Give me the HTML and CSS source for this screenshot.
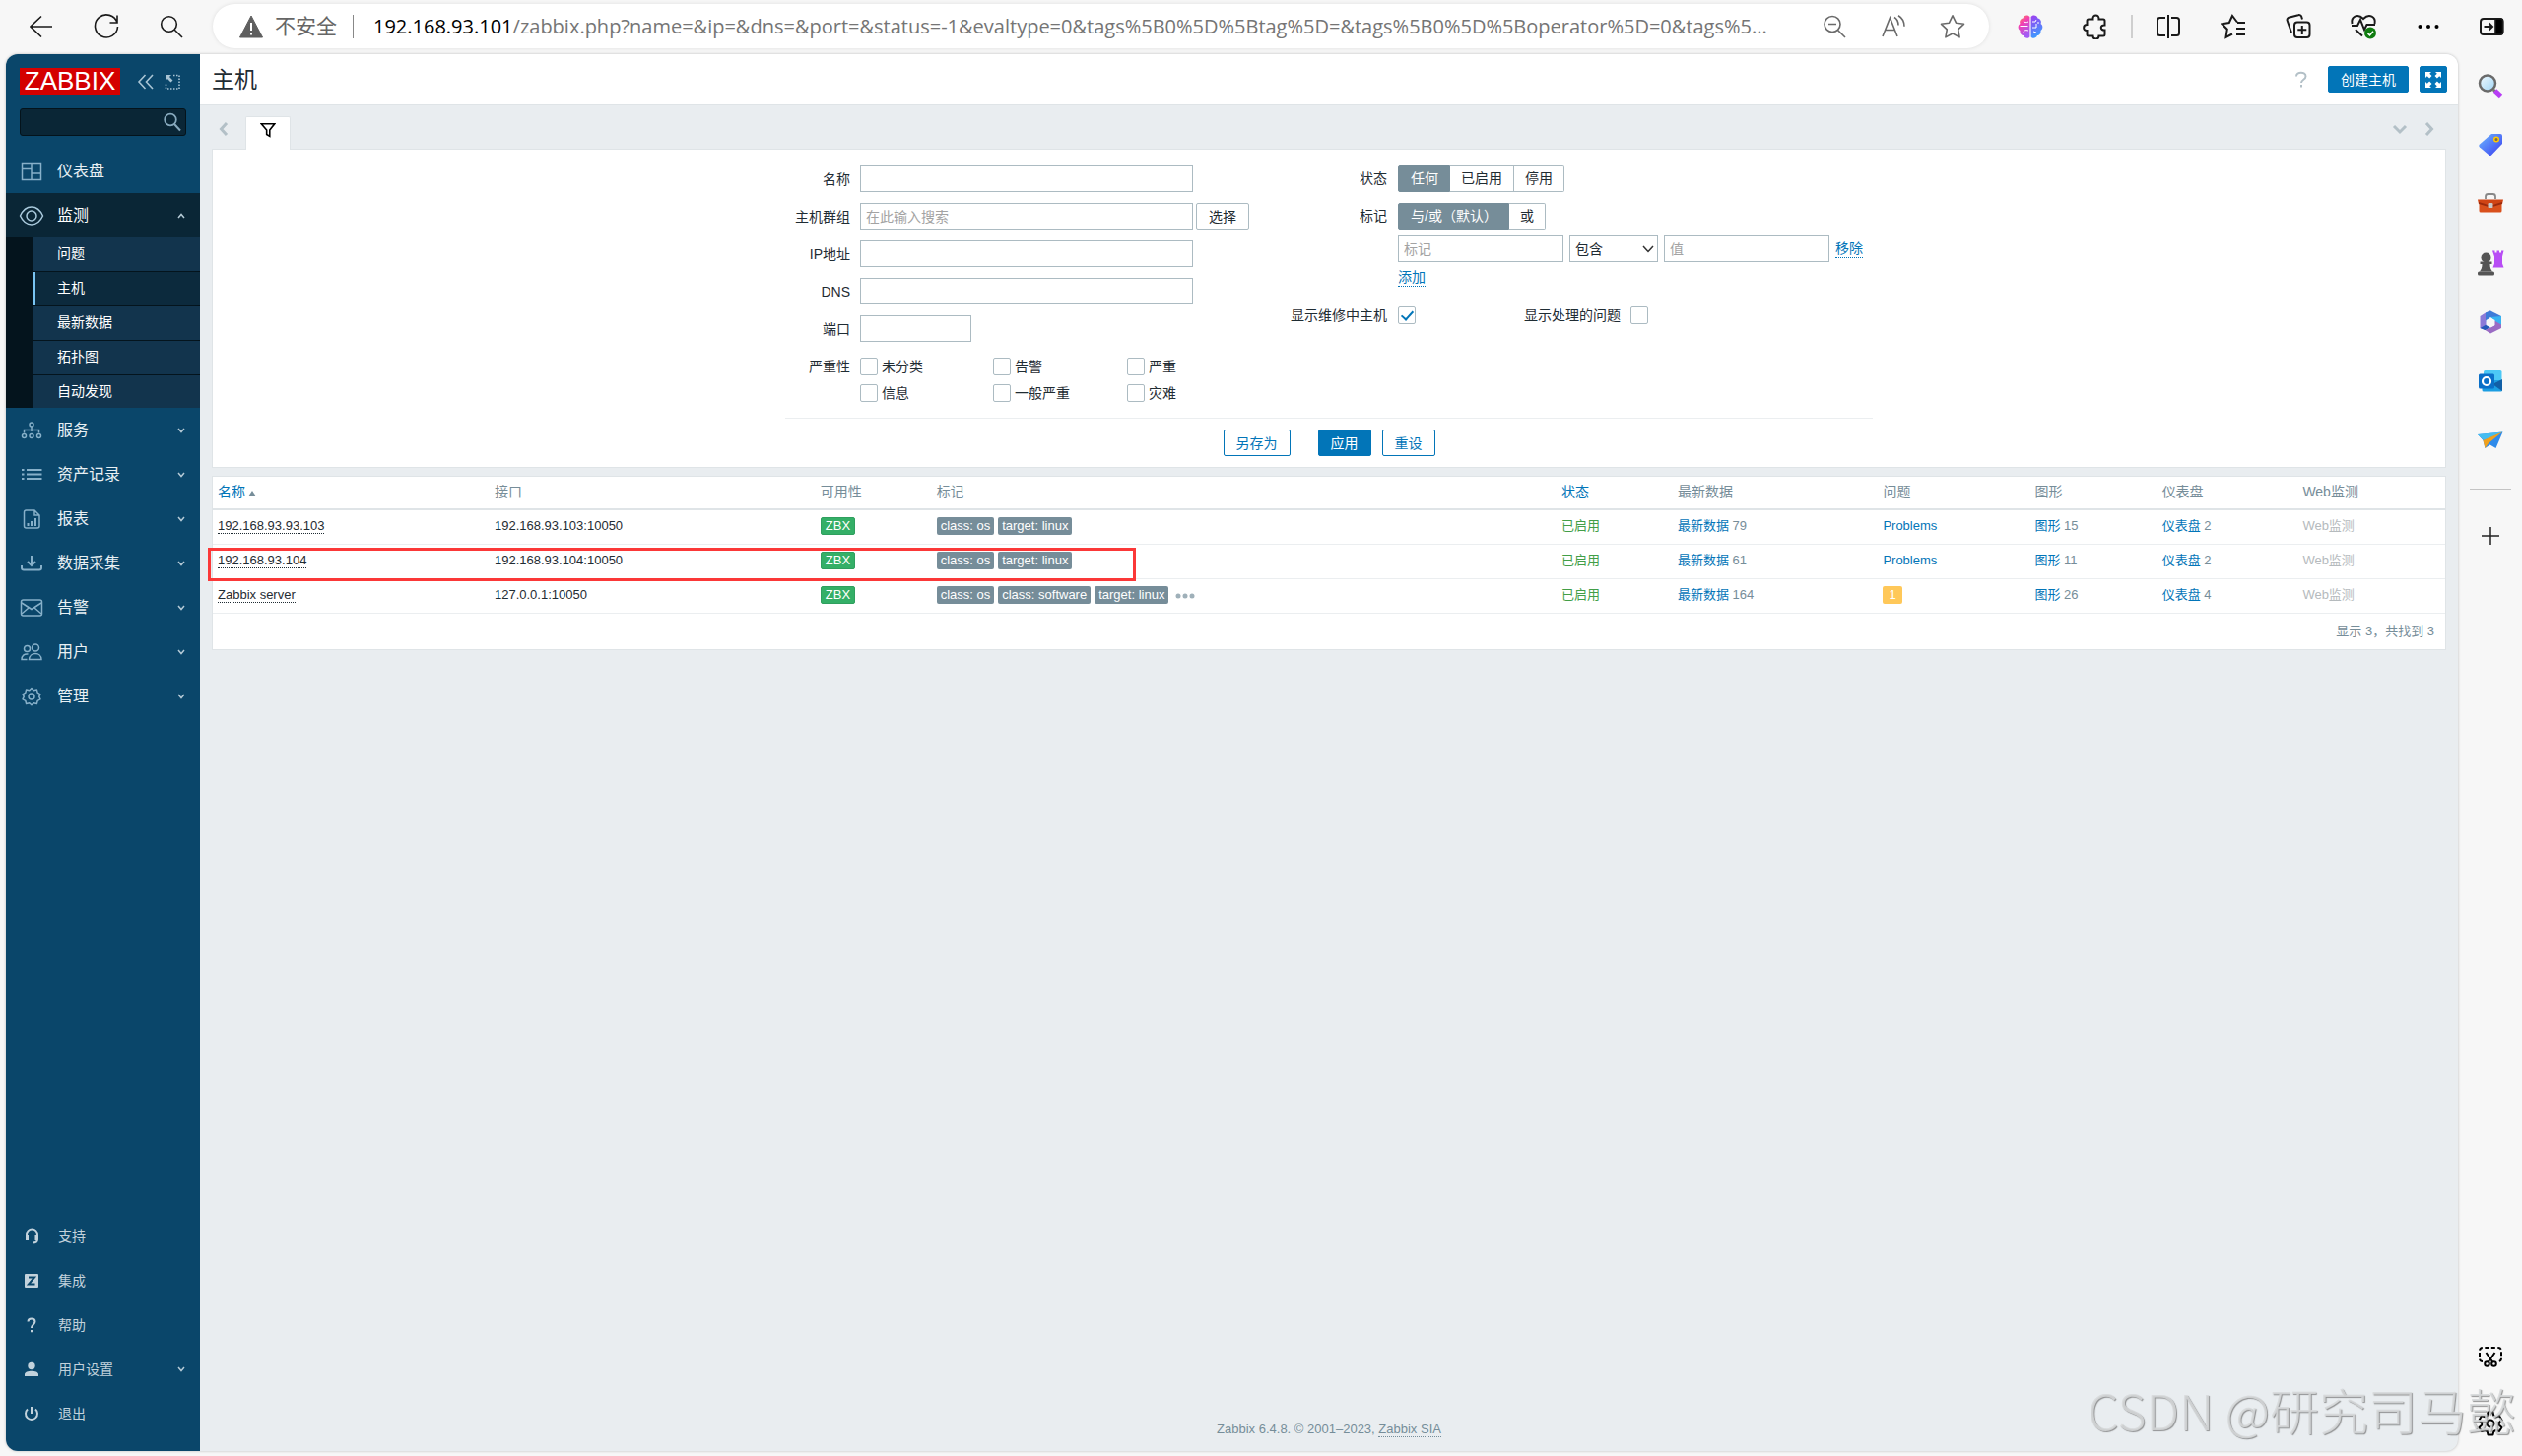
FILE: index.html
```html
<!DOCTYPE html>
<html lang="zh-CN">
<head>
<meta charset="utf-8">
<title>主机</title>
<link rel="stylesheet" href="styles.css">
</head>
<body>
<div class="browser">
  <header class="toolbar">
    <button class="tool" aria-label="后退"><svg width="24" height="24" viewBox="0 0 24 24"><path d="M23 12H1M12 1.500L1 12l11 10.500"/></svg></button>
    <button class="tool" aria-label="刷新"><svg width="26" height="26" viewBox="0 0 26 26"><path d="M24 9A11.500 11.500 0 1 0 24.500 13M24 1.500V9h-7.500"/></svg></button>
    <button class="tool" aria-label="搜索"><svg width="24" height="24" viewBox="0 0 24 24"><circle cx="9.500" cy="9.500" r="7.800"/><path d="M15 15l8 8"/></svg></button>
    <div class="address">
      <svg class="warn" width="24" height="24" viewBox="0 0 24 24"><path d="M12 1L23.500 23H.5z" fill="#5f5f5f" stroke="#5f5f5f" stroke-linejoin="round"/><path d="M12 8v8M12 18v2.500" stroke="#fff" stroke-width="2"/></svg>
      <span class="insecure">不安全</span>
      <span class="bar"></span>
      <span class="url"><b>192.168.93.101</b>/zabbix.php?name=&amp;ip=&amp;dns=&amp;port=&amp;status=-1&amp;evaltype=0&amp;tags%5B0%5D%5Btag%5D=&amp;tags%5B0%5D%5Boperator%5D=0&amp;tags%5...</span>
      <button class="tool in" aria-label="缩小"><svg width="24" height="24" viewBox="0 0 24 24"><circle cx="10" cy="9.500" r="8"/><path d="M15.500 15.500l7.500 7.500M6 9.500h8"/></svg></button>
      <button class="tool in" aria-label="朗读"><svg width="26" height="24" viewBox="0 0 26 24"><path d="M2 22L9.500 3 17 22M5 15.500h9M14 2.500c3 2 4 5 4 8M18 .8c5 3 6 7 6 11"/></svg></button>
      <button class="tool in" aria-label="收藏"><svg width="26" height="26" viewBox="0 0 26 26"><path d="M13 1.800l3.500 7.400 8 1.100-5.800 5.600 1.400 8L13 20l-7.100 3.900 1.400-8L1.500 10.300l8-1.100z" stroke-linejoin="round"/></svg></button>
    </div>
    <button class="tool" aria-label="脑图"><svg width="26" height="26" viewBox="0 0 26 26"><defs><linearGradient id="brL" x1="0" y1="0" x2=".4" y2="1"><stop offset="0" stop-color="#ff9a3c"/><stop offset=".4" stop-color="#f43fb0"/><stop offset="1" stop-color="#a35bf5"/></linearGradient><linearGradient id="brR" x1="0" y1="0" x2=".3" y2="1"><stop offset="0" stop-color="#a13df0"/><stop offset="1" stop-color="#3d9bff"/></linearGradient></defs><path d="M12.400 3C11 .5 6 1 5.500 4.500 2.500 5 1.500 8 2.500 10 0 11.500 0 15.500 2.500 17c-.3 3 1.500 5 3.500 5 1 3.200 5 3.500 6.400 1.500z" fill="url(#brL)" stroke="none"/><path d="M13.600 3C15 .5 20 1 20.500 4.500c3 .5 4 3.500 3 5.500 2.500 1.500 2.500 5.500 0 7 .3 3-1.500 5-3.500 5-1 3.200-5 3.500-6.400 1.500z" fill="url(#brR)" stroke="none"/><path d="M2.500 12.500h8M6 7c1 2 3 2 5 1M6 19c0-2 2-3 5-2M15 8h3l1-2M19 10v4h-4M16 18l3 1M21 8v2" stroke="#fff" stroke-width="1"/></svg></button>
    <button class="tool" aria-label="扩展"><svg width="26" height="26" viewBox="0 0 26 26"><path d="M6 5.500h4.500C10 0 17 0 16.500 5.500H21a1.500 1.500 0 0 1 1.500 1.500v4.500c-5-.5-5 5.500 0 5v4.500A1.500 1.500 0 0 1 21 22.500h-4.500c0 4-6 4-6 0H6A1.500 1.500 0 0 1 4.500 21v-4c-4.500.5-4.500-6 0-6V7A1.500 1.500 0 0 1 6 5.500z" stroke-width="2"/></svg></button>
    <span class="rule"></span>
    <button class="tool" aria-label="分屏"><svg width="26" height="26" viewBox="0 0 26 26"><path d="M10 4H4.500A2.500 2.500 0 0 0 2 6.500v13A2.500 2.500 0 0 0 4.500 22H10M16 4h5.500A2.500 2.500 0 0 1 24 6.500v13a2.500 2.500 0 0 1-2.500 2.500H16M13 1v24" stroke-width="2"/></svg></button>
    <button class="tool" aria-label="收藏夹"><svg width="26" height="26" viewBox="0 0 26 26"><path d="M17 8.500L12 2 8.800 9 1.500 10.300l5.300 5.400L5.500 24l6.500-3.500M17 9h8M16 15h9M16 21h9" stroke-width="2"/></svg></button>
    <button class="tool" aria-label="集锦"><svg width="26" height="26" viewBox="0 0 26 26"><rect x="9" y="8.500" width="15.500" height="15.500" rx="3" stroke-width="2"/><path d="M16.800 12v9M12.300 16.300h9M6 19L1.700 7a2.500 2.500 0 0 1 1.600-3.200L13 1.200a2.500 2.500 0 0 1 3.200 1.600L17 5.500" stroke-width="2"/></svg></button>
    <button class="tool" aria-label="性能"><svg width="28" height="28" viewBox="0 0 28 28"><path d="M2.500 11C1 4 8 0 14 6c6-6 13-2 11.500 5M2 13h6l3-6 4 10 2.500-5H26M6 17l7 6.500" stroke-width="2"/><circle cx="21" cy="20.500" r="6" fill="#107c10" stroke="none"/><path d="M18.500 21l2 1.800 3.500-4" stroke="#fff"/></svg></button>
    <button class="tool" aria-label="更多"><svg width="24" height="24" viewBox="0 0 24 24"><g fill="#000" stroke="none"><circle cx="3.500" cy="12" r="2"/><circle cx="12" cy="12" r="2"/><circle cx="20.500" cy="12" r="2"/></g></svg></button>
    <button class="tool last" aria-label="侧栏"><svg width="26" height="26" viewBox="0 0 26 26"><rect x="2" y="5" width="22.500" height="16" rx="3" stroke-width="2"/><path d="M17 5h5.500a2 2 0 0 1 2 2v12a2 2 0 0 1-2 2H17z" fill="#000"/><path d="M5.500 13h8M10.500 9.500L14 13l-3.500 3.500" stroke-width="2"/></svg></button>
  </header>

  <div class="stage">
    <div class="frame">
      <aside class="sidebar">
        <div class="brand">
          <a class="logo" href="#">ZABBIX</a>
          <button class="mini" aria-label="收起"><svg width="18" height="16" viewBox="0 0 18 16"><path d="M8.500 1L2 8l6.500 7M16 1L9.500 8l6.500 7"/></svg></button>
          <button class="mini" aria-label="隐藏"><svg width="16" height="16" viewBox="0 0 16 16"><path d="M9 1.500h6v13.500H1.500V9" stroke-dasharray="1.500 1.500"/><path d="M1 1h6L5 3l3.500 3.500-2 2L3 5 1 7z" fill="#a9c4d4" stroke="none"/></svg></button>
        </div>
        <form class="search">
          <input type="text" aria-label="搜索">
          <button type="button" aria-label="搜索"><svg width="20" height="20" viewBox="0 0 20 20"><circle cx="8" cy="7.500" r="5.800"/><path d="M12 12l6 6.500" stroke-width="2"/></svg></button>
        </form>
        <nav class="menu">
          <a class="item" href="#"><svg class="ico" width="26" height="20" viewBox="0 0 26 20"><path d="M3.500 1.500h19v17h-19zM13 1.500v17M3.500 7.500H13M13 12h9.500"/></svg><span>仪表盘</span></a>
          <a class="item open" href="#"><svg class="ico" width="26" height="22" viewBox="0 0 26 22"><path d="M1.500 11C7-1 19-1 24.500 11 19 23 7 23 1.500 11z"/><circle cx="13" cy="11" r="5"/></svg><span>监测</span><svg class="chev" width="8" height="8" viewBox="0 0 8 8"><path d="M1 6l3-3.500L7 6"/></svg></a>
          <div class="sub">
            <a href="#">问题</a>
            <a class="current" href="#">主机</a>
            <a href="#">最新数据</a>
            <a href="#">拓扑图</a>
            <a href="#">自动发现</a>
          </div>
          <a class="item" href="#"><svg class="ico" width="26" height="20" viewBox="0 0 26 20"><circle cx="13" cy="4" r="2"/><circle cx="5.500" cy="15.500" r="2"/><circle cx="13" cy="15.500" r="2"/><circle cx="20.500" cy="15.500" r="2"/><path d="M13 6v5M5.500 12.500V9.500h15v3"/></svg><span>服务</span><svg class="chev" width="8" height="8" viewBox="0 0 8 8"><path d="M1 2l3 3.500L7 2"/></svg></a>
          <a class="item" href="#"><svg class="ico" width="26" height="20" viewBox="0 0 26 20"><path d="M3 5h2.500M3 9.500h2.500M3 14h2.500M8 5h15.500M8 9.500h15.500M8 14h15.500" stroke-width="2"/></svg><span>资产记录</span><svg class="chev" width="8" height="8" viewBox="0 0 8 8"><path d="M1 2l3 3.500L7 2"/></svg></a>
          <a class="item" href="#"><svg class="ico" width="26" height="22" viewBox="0 0 26 22"><path d="M7.500 2H16l5 5v11a2 2 0 0 1-2 2H7.500a2 2 0 0 1-2-2V4a2 2 0 0 1 2-2zM16 2v5h5"/><path d="M9.500 18v-3M13 18v-5M17 18v-8" stroke-width="2"/></svg><span>报表</span><svg class="chev" width="8" height="8" viewBox="0 0 8 8"><path d="M1 2l3 3.500L7 2"/></svg></a>
          <a class="item" href="#"><svg class="ico" width="26" height="20" viewBox="0 0 26 20"><path d="M13 2v9M9 8l4 4 4-4M3 12v2.500a2 2 0 0 0 2 2h16a2 2 0 0 0 2-2V12" stroke-width="2"/></svg><span>数据采集</span><svg class="chev" width="8" height="8" viewBox="0 0 8 8"><path d="M1 2l3 3.500L7 2"/></svg></a>
          <a class="item" href="#"><svg class="ico" width="26" height="20" viewBox="0 0 26 20"><rect x="2.500" y="2" width="21" height="16" rx="2"/><path d="M3 5l10 6.500L23 5M3 16l7-6M23 16l-7-6"/></svg><span>告警</span><svg class="chev" width="8" height="8" viewBox="0 0 8 8"><path d="M1 2l3 3.500L7 2"/></svg></a>
          <a class="item" href="#"><svg class="ico" width="26" height="20" viewBox="0 0 26 20"><circle cx="8.500" cy="6.500" r="3"/><circle cx="17" cy="5.500" r="3.500"/><path d="M10.500 17.500c.5-8 12.500-8 12.500 0zM8.500 17.500H3c0-4 2.500-6 6.500-5.500"/></svg><span>用户</span><svg class="chev" width="8" height="8" viewBox="0 0 8 8"><path d="M1 2l3 3.500L7 2"/></svg></a>
          <a class="item" href="#"><svg class="ico" width="26" height="20" viewBox="0 0 26 20"><circle cx="13" cy="10" r="3"/><path d="M13 1.500l2.200 2.300 3.200-.8.800 3.200 2.800 1.600-1.300 2.400 1.300 2.600-2.800 1.500-.8 3.200-3.200-.8L13 18.800l-2.200-2.100-3.200.8-.8-3.200L4 12.800l1.300-2.600L4 7.800l2.800-1.600.8-3.200 3.200.8z" stroke-linejoin="round"/></svg><span>管理</span><svg class="chev" width="8" height="8" viewBox="0 0 8 8"><path d="M1 2l3 3.500L7 2"/></svg></a>
        </nav>
        <nav class="menu user">
          <a class="item" href="#"><svg class="ico" width="26" height="18" viewBox="0 0 26 18"><path d="M8 11V8a5.200 5.200 0 0 1 11 0v4c0 2-2 3.500-5 3.500" stroke-width="2"/><path d="M7 8h3v5H7zM16.500 8h3v5h-3z" fill="#c2d2dc" stroke="none"/></svg><span>支持</span></a>
          <a class="item" href="#"><svg class="ico" width="26" height="18" viewBox="0 0 26 18"><rect x="6" y="2" width="14" height="14" rx="1" fill="#c2d2dc" stroke="none"/><path d="M10 5.500h6l-6 7h6.500" stroke="#0a466a" stroke-width="2"/></svg><span>集成</span></a>
          <a class="item" href="#"><svg class="ico" width="26" height="18" viewBox="0 0 26 18"><path d="M9.500 5.500c0-4 7-4 7 0 0 3-3.500 3-3.500 6.500M13 14v2.200" stroke-width="2"/></svg><span>帮助</span></a>
          <a class="item" href="#"><svg class="ico" width="26" height="18" viewBox="0 0 26 18"><g fill="#c2d2dc" stroke="none"><circle cx="13" cy="5.500" r="3.700"/><path d="M6 16v-2c0-4.500 14-4.500 14 0v2z"/></g></svg><span>用户设置</span><svg class="chev" width="8" height="8" viewBox="0 0 8 8"><path d="M1 2l3 3.500L7 2"/></svg></a>
          <a class="item" href="#"><svg class="ico" width="26" height="18" viewBox="0 0 26 18"><path d="M9 4.500a6 6 0 1 0 8 0M13 2v7" stroke-width="2"/></svg><span>退出</span></a>
        </nav>
      </aside>

      <div class="content">
        <header class="title">
          <h1>主机</h1>
          <button class="help" aria-label="帮助"><svg width="14" height="18" viewBox="0 0 14 18"><path d="M2 5.500c0-5 9.500-5 9.500 0 0 3.200-4.500 3.200-4.500 6.500M7 14v2.500" fill="none" stroke="#b3c0c7" stroke-width="2"/></svg></button>
          <button class="btn solid">创建主机</button>
          <button class="btn solid full" aria-label="全屏"><svg width="18" height="18" viewBox="0 0 18 18"><g fill="#fff"><path d="M1 1h6L5.200 2.800l2.300 2.300-2.400 2.400-2.300-2.300L1 7z"/><path d="M17 1h-6l1.800 1.800-2.300 2.300 2.400 2.400 2.300-2.300L17 7zM1 17h6l-1.800-1.800 2.300-2.300-2.400-2.400-2.300 2.300L1 11zM17 17h-6l1.800-1.800-2.300-2.300 2.400-2.400 2.300 2.300L17 11z"/></g></svg></button>
        </header>

        <main class="main">
          <div class="tabs">
            <button class="nav" aria-label="上一个"><svg width="12" height="16" viewBox="0 0 12 16"><path d="M9 2L3.500 8 9 14"/></svg></button>
            <button class="tab" aria-label="过滤器"><svg width="16" height="16" viewBox="0 0 18 18"><path d="M1.500 2h15L11 9v7.200L7.500 14V9z" fill="none" stroke="#000" stroke-width="1.800"/></svg></button>
            <span class="grow"></span>
            <button class="nav" aria-label="展开"><svg width="16" height="12" viewBox="0 0 16 12"><path d="M2 3l6 6 6-6"/></svg></button>
            <button class="nav" aria-label="下一个"><svg width="12" height="16" viewBox="0 0 12 16"><path d="M3 2l5.500 6L3 14"/></svg></button>
          </div>

          <form class="filter">
            <div class="cols">
              <div class="left">
                <label for="f-name">名称</label>
                <div><input class="text" id="f-name" type="text"></div>
                <label for="f-group">主机群组</label>
                <div><input class="text" id="f-group" type="text" placeholder="在此输入搜索"><button class="btn plain" type="button">选择</button></div>
                <label for="f-ip">IP地址</label>
                <div><input class="text" id="f-ip" type="text"></div>
                <label for="f-dns">DNS</label>
                <div><input class="text" id="f-dns" type="text"></div>
                <label for="f-port">端口</label>
                <div><input class="text port" id="f-port" type="text"></div>
                <span class="sev-label">严重性</span>
                <div class="sev">
                  <label><input type="checkbox">未分类</label>
                  <label><input type="checkbox">告警</label>
                  <label><input type="checkbox">严重</label>
                  <label><input type="checkbox">信息</label>
                  <label><input type="checkbox">一般严重</label>
                  <label><input type="checkbox">灾难</label>
                </div>
              </div>
              <div class="right">
                <span class="lab">状态</span>
                <div class="seg">
                  <label><input type="radio" name="status" checked>任何</label>
                  <label><input type="radio" name="status">已启用</label>
                  <label><input type="radio" name="status">停用</label>
                </div>
                <span class="lab">标记</span>
                <div class="tagbox">
                  <div class="seg">
                    <label><input type="radio" name="eval" checked>与/或（默认）</label>
                    <label><input type="radio" name="eval">或</label>
                  </div>
                  <div class="tagrow">
                    <input class="text tag" type="text" placeholder="标记" aria-label="标记">
                    <select class="text" aria-label="运算符"><option>包含</option></select>
                    <input class="text tag" type="text" placeholder="值" aria-label="值">
                    <a class="dotted" href="#">移除</a>
                  </div>
                  <div class="add"><a class="dotted" href="#">添加</a></div>
                </div>
                <label class="lab" for="f-maint">显示维修中主机</label>
                <div class="checks"><input id="f-maint" type="checkbox" checked><label for="f-supp">显示处理的问题</label><input id="f-supp" type="checkbox"></div>
              </div>
            </div>
            <div class="actions">
              <button class="btn outline save" type="button">另存为</button>
              <button class="btn solid" type="button">应用</button>
              <button class="btn outline" type="button">重设</button>
            </div>
          </form>

          <div class="results">
            <table>
              <colgroup><col class="c1"><col class="c2"><col class="c3"><col class="c4"><col class="c3"><col class="c6"><col class="c7"><col class="c8"><col class="c9"><col></colgroup>
              <thead><tr><th><a href="#">名称<i class="asc"></i></a></th><th>接口</th><th>可用性</th><th>标记</th><th><a href="#">状态</a></th><th>最新数据</th><th>问题</th><th>图形</th><th>仪表盘</th><th>Web监测</th></tr></thead>
              <tbody>
                <tr><td><a class="host" href="#">192.168.93.93.103</a></td><td>192.168.93.103:10050</td><td><span class="zbx">ZBX</span></td><td><span class="chip">class: os</span><span class="chip">target: linux</span></td><td><a class="on" href="#">已启用</a></td><td><a href="#">最新数据</a> <small>79</small></td><td><a href="#">Problems</a></td><td><a href="#">图形</a> <small>15</small></td><td><a href="#">仪表盘</a> <small>2</small></td><td class="off">Web监测</td></tr>
                <tr><td><a class="host" href="#">192.168.93.104</a></td><td>192.168.93.104:10050</td><td><span class="zbx">ZBX</span></td><td><span class="chip">class: os</span><span class="chip">target: linux</span></td><td><a class="on" href="#">已启用</a></td><td><a href="#">最新数据</a> <small>61</small></td><td><a href="#">Problems</a></td><td><a href="#">图形</a> <small>11</small></td><td><a href="#">仪表盘</a> <small>2</small></td><td class="off">Web监测</td></tr>
                <tr><td><a class="host" href="#">Zabbix server</a></td><td>127.0.0.1:10050</td><td><span class="zbx">ZBX</span></td><td><span class="chip">class: os</span><span class="chip">class: software</span><span class="chip">target: linux</span><button class="dots" aria-label="更多"><svg width="20" height="6" viewBox="0 0 20 6"><g fill="#9fb0b9"><circle cx="3" cy="3" r="2.500"/><circle cx="10" cy="3" r="2.500"/><circle cx="17" cy="3" r="2.500"/></g></svg></button></td><td><a class="on" href="#">已启用</a></td><td><a href="#">最新数据</a> <small>164</small></td><td><a class="prob" href="#">1</a></td><td><a href="#">图形</a> <small>26</small></td><td><a href="#">仪表盘</a> <small>4</small></td><td class="off">Web监测</td></tr>
              </tbody>
            </table>
            <p class="count">显示 3，共找到 3</p>
            <div class="marker"></div>
          </div>
        </main>
        <footer class="foot">Zabbix 6.4.8. © 2001–2023, <a href="#">Zabbix SIA</a></footer>
      </div>
    </div>

    <aside class="rail">
      <button aria-label="搜索"><svg width="28" height="28" viewBox="0 0 28 28"><defs><linearGradient id="lens" x1="0" y1="0" x2="1" y2="1"><stop offset="0" stop-color="#f0faff"/><stop offset="1" stop-color="#9fd4f5"/></linearGradient></defs><path d="M17 18l4 4" stroke="#777" stroke-width="3"/><circle cx="11" cy="11.500" r="8" fill="url(#lens)" stroke="#6a6a6a" stroke-width="2.500"/><path d="M18.500 19l6 5.500" stroke="#b83df5" stroke-width="5"/></svg></button>
      <button aria-label="购物"><svg width="28" height="28" viewBox="0 0 28 28"><defs><linearGradient id="tag" x1="0" y1="0" x2="1" y2="1"><stop offset="0" stop-color="#6db8ff"/><stop offset="1" stop-color="#3a3df0"/></linearGradient></defs><path d="M15 3h9a2 2 0 0 1 2 2v8L15 24.500a2 2 0 0 1-2.500 0L3 16.500a2 2 0 0 1 0-3z" fill="url(#tag)"/><circle cx="20" cy="8.500" r="2.300" fill="#7a6a50" stroke="#ffc800" stroke-width="1.500"/></svg></button>
      <button aria-label="工具"><svg width="28" height="28" viewBox="0 0 28 28"><path d="M9 9V6.500A2.500 2.500 0 0 1 11.500 4h5A2.500 2.500 0 0 1 19 6.500V9" fill="none" stroke="#888" stroke-width="1.800"/><path d="M1 9.500h26l-1 4.500H2z" fill="#d04414"/><path d="M2.500 14h23v7a1.500 1.500 0 0 1-1.500 1.500H4A1.500 1.500 0 0 1 2.500 21z" fill="#d9501c"/><path d="M2 12l10 3h4l10-3v2l-10 3h-4L2 14z" fill="#9c2a0c"/><rect x="11.500" y="13" width="5" height="5" rx="1" fill="#c9c9c9"/></svg></button>
      <button aria-label="游戏"><svg width="28" height="28" viewBox="0 0 28 28"><path d="M16 1.500h2.500v2h2v-2H23v2h2v-2h2.500l-1.500 6v7l1.500 4h-11l1.500-4v-7z" fill="#b84df5"/><g fill="#555"><circle cx="9.500" cy="8.500" r="5"/><path d="M3.500 12.500h12v2.500h-2c0 4 1 5.500 2.500 7.500H3c1.500-2 2.500-3.500 2.500-7.500h-2z"/><rect x="1" y="22.500" width="17" height="4" rx="1.500"/></g></svg></button>
      <button aria-label="Microsoft 365"><svg width="28" height="28" viewBox="0 0 28 28"><path d="M14 2.500L9 4.500 3.500 8v12l5 2 2.500-1V9.500l3-2 5 3.500z" fill="#8b7ad8"/><path d="M14 2.500L9 4.500V14l5-5 11 3V8z" fill="#3e7bd8"/><path d="M25 12v8l-11 5.500L8.500 22l9.500-4.500v-6z" fill="#9a6cc4"/><path d="M25 8v8.500L18 12.500 14 9z" fill="#38b3f2"/><path d="M3.500 20l7-4 4 3-6 3z" fill="#2658b8"/><path d="M14 9.500l4.500 2.500v5L14 19.500 9.500 17v-5z" fill="#f7f7f7"/></svg></button>
      <button aria-label="Outlook"><svg width="28" height="28" viewBox="0 0 28 28"><rect x="7" y="3" width="18.500" height="14" rx="1.500" fill="#4cc8f5"/><path d="M7 8h9v9H7z" fill="#1c7fd0"/><path d="M5.500 13L26 13v10a1.500 1.500 0 0 1-1.500 1.500H7A1.500 1.500 0 0 1 5.500 23z" fill="#1b9de2"/><path d="M16 17l10-5v12z" fill="#125fa6"/><rect x="2" y="6.500" width="16" height="15" rx="1.500" fill="#0a6fc8"/><circle cx="10" cy="14" r="4" fill="none" stroke="#fff" stroke-width="2.200"/></svg></button>
      <button aria-label="Drop"><svg width="28" height="28" viewBox="0 0 28 28"><path d="M1 8l25.500-2.500L19.500 22l-6-3.500-5 3.500-2-8z" fill="#2f8bea"/><path d="M1 8l25.500-2.500L7 14z" fill="#45bdf0"/><path d="M26 5.500L12 17l-3.500 5L6.500 14z" fill="#f0a01c"/></svg></button>
      <hr>
      <button aria-label="添加"><svg width="20" height="20" viewBox="0 0 20 20"><path d="M10 1v18M1 10h18" stroke="#222" stroke-width="1.500"/></svg></button>
      <span class="grow"></span>
      <button class="low" aria-label="截图"><svg width="28" height="28" viewBox="0 0 28 28" fill="none" stroke="#000" stroke-width="2"><path d="M6 19a3 3 0 0 1-3-3V8a3 3 0 0 1 3-3h16a3 3 0 0 1 3 3v8a3 3 0 0 1-3 3" stroke-dasharray="4 2.500"/><path d="M9.500 10l7 10M18.500 10l-7 10"/><circle cx="10.500" cy="21.500" r="2.300"/><circle cx="17.500" cy="21.500" r="2.300"/></svg></button>
      <button class="low" aria-label="设置"><svg width="28" height="28" viewBox="0 0 28 28" fill="none" stroke="#000" stroke-width="2"><circle cx="14" cy="14" r="3.500"/><path d="M11.500 2.500h5l.8 3.500 2.200 1.300 3.500-1 2.500 4.200-2.700 2.500v2.500l2.700 2.500-2.500 4-3.500-1-2.200 1.200-.8 3.300h-5l-.8-3.300L8.500 21 5 22l-2.500-4 2.700-2.500V13L2.500 10.500 5 6.300l3.500 1L10.700 6z" stroke-linejoin="round"/></svg></button>
    </aside>
  </div>
  <div class="watermark">CSDN @研究司马懿</div>
</div>
</body>
</html>
```
FILE: styles.css
```css
* { box-sizing: border-box; }
body {
  margin: 0;
  background: #f7f7f7;
  color: #1f2c33;
  font: 14px/18px "Liberation Sans", "Noto Sans CJK SC", sans-serif;
}
button, input, select { font: inherit; color: inherit; }
button { background: none; border: 0; padding: 0; }
a { color: #0275b8; text-decoration: none; }
.grow { flex: 1; }

.browser {
  position: relative;
  display: flex;
  flex-direction: column;
  min-height: 100vh;
  overflow: hidden;
}

/* browser toolbar */
.toolbar {
  display: flex;
  align-items: center;
  height: 55px;
  padding: 0 0 2px 9px;
}
.tool {
  flex: none;
  display: flex;
  align-items: center;
  justify-content: center;
  width: 66px;
  height: 52px;
}
.tool.last { width: 62px; }
.tool.in { width: 60px; height: 44px; }
.tool svg { fill: none; stroke: #1a1a1a; stroke-width: 1.6; }
.tool.in svg { stroke: #6a6a6a; }
.rule { width: 2px; height: 24px; margin: 0 3px; background: #cfcfcf; }
.address {
  flex: 1;
  min-width: 0;
  display: flex;
  align-items: center;
  height: 45px;
  margin: 0 9px;
  padding: 0 7px 0 27px;
  border-radius: 23px;
  background: #fff;
  box-shadow: 0 0 4px rgba(0, 0, 0, .1);
}
.warn { flex: none; fill: none; }
.insecure { flex: none; margin-left: 12px; font-size: 21px; color: #666; }
.bar { flex: none; width: 1px; height: 24px; margin: 0 20px 0 16px; background: #888; }
.url {
  flex: 1;
  min-width: 0;
  overflow: hidden;
  white-space: nowrap;
  text-overflow: ellipsis;
  font: 20px/28px "Open Sans", sans-serif;
  color: #757575;
}
.url b { font-weight: 400; color: #000; }

.stage { flex: 1; display: flex; padding: 0 0 5px 6px; }
.frame {
  flex: 1;
  min-width: 0;
  display: flex;
  border-radius: 12px;
  overflow: hidden;
  background: #e9edf0;
  box-shadow: 0 0 3px rgba(0, 0, 0, .25);
}

/* application sidebar */
.sidebar {
  flex: none;
  display: flex;
  flex-direction: column;
  width: 197px;
  padding-bottom: 16px;
  background: #0a466a;
}
.brand { display: flex; align-items: center; padding: 14px 0 0 14px; }
.logo {
  flex: none;
  width: 102px;
  margin-right: 17px;
  background: #d40000;
  color: #fff;
  font-size: 26px;
  line-height: 27px;
  text-align: center;
}
.mini { display: flex; margin-right: 10px; }
.mini svg { fill: none; stroke: #a9c4d4; stroke-width: 1.6; }
.search {
  display: flex;
  align-items: center;
  height: 28px;
  margin: 14px 14px 13px;
  border: 1px solid #04131b;
  border-radius: 3px;
  background: #0a2636;
}
.search input { flex: 1; min-width: 0; border: 0; background: none; color: #fff; }
.search button { display: flex; padding-right: 3px; }
.search svg { fill: none; stroke: #87a9bd; stroke-width: 1.8; }
.item {
  display: flex;
  align-items: center;
  height: 45px;
  padding: 0 15px 0 13px;
  font-size: 16px;
  color: #e8f0f4;
}
.item span { flex: 1; margin-left: 13px; }
.ico { fill: none; stroke: #87b0c9; stroke-width: 1.5; }
.chev { fill: none; stroke: #b5cad6; stroke-width: 1.5; }
.open { background: #0a2636; color: #fff; }
.open .ico { stroke: #a9c9dc; }
.sub {
  border-left: 27px solid #04141d;
  background: #04141d;
  box-shadow: inset 0 4px 4px rgba(0, 0, 0, .3);
}
.sub a {
  display: block;
  height: 34px;
  margin-bottom: 1px;
  padding-left: 22px;
  border-left: 3px solid #12344d;
  background: #12344d;
  color: #fff;
  line-height: 32px;
}
.sub a:last-child { height: 33px; margin: 0; }
.sub .current { background: #0c2a3d; border-color: #79c4f2; }
.user { margin-top: auto; }
.user .item { font-size: 14px; color: #c2d2dc; }
.user .item span { margin-left: 14px; }
.user .ico { stroke: #c2d2dc; }

/* page content */
.content { flex: 1; min-width: 0; display: flex; flex-direction: column; }
.title {
  display: flex;
  align-items: center;
  height: 52px;
  padding: 0 11px 0 12px;
  border-bottom: 1px solid #dfe4e7;
  background: #fff;
}
h1 { flex: 1; margin: 0; font-size: 23px; line-height: 32px; font-weight: 400; }
.help { display: flex; margin-right: 20px; }
.btn {
  height: 27px;
  padding: 0 12px;
  border: 1px solid #0275b8;
  border-radius: 2px;
  background: #fff;
  line-height: 18px;
}
.outline { color: #0275b8; }
.solid { background: #0275b8; color: #fff; }
.plain { margin-left: 3px; border-color: #acbbc2; }
.title .full { display: flex; align-items: center; margin-left: 11px; padding: 0 4px; }

.main { padding: 11px 12px 0; }
.tabs { display: flex; align-items: flex-start; height: 33px; }
.nav { display: flex; align-items: center; height: 26px; margin-left: 6px; }
.nav svg { fill: none; stroke: #b3c0c7; stroke-width: 3; }
.nav:last-child { margin: 0 11px 0 16px; }
.tab {
  position: relative;
  display: flex;
  justify-content: center;
  width: 46px;
  height: 34px;
  margin-left: 16px;
  padding-top: 5px;
  border: 1px solid #dfe4e7;
  border-bottom: 0;
  border-radius: 2px 2px 0 0;
  background: #fff;
}

.filter {
  display: flex;
  flex-direction: column;
  align-items: center;
  padding: 16px 0 11px;
  border: 1px solid #dfe4e7;
  background: #fff;
}
.cols {
  display: flex;
  justify-content: space-between;
  align-items: flex-start;
  width: 1104px;
  padding-bottom: 16px;
  border-bottom: 1px solid #ebeef0;
}
.left {
  display: grid;
  grid-template-columns: 66px 396px;
  gap: 11px 10px;
  align-items: center;
}
.left > label, .left > span, .lab { text-align: right; }
.left > div { display: flex; }
.text {
  width: 338px;
  height: 27px;
  padding: 0 5px;
  border: 1px solid #acbbc2;
  border-radius: 0;
  background: #fff;
}
.text::placeholder { color: #a3a3a3; opacity: 1; }
.text.port { width: 113px; }
.sev-label { align-self: start; padding-top: 5px; }
.left .sev {
  display: grid;
  grid-template-columns: 135px 136px auto;
  row-gap: 9px;
  padding-top: 5px;
}
.sev label { display: flex; gap: 4px; }
input[type="checkbox"] {
  appearance: none;
  display: grid;
  place-items: center;
  width: 18px;
  height: 18px;
  margin: 0;
  border: 1px solid #acbbc2;
  border-radius: 2px;
  background: #fff;
}
input[type="checkbox"]:checked::before {
  content: "";
  width: 5px;
  height: 10px;
  margin-bottom: 3px;
  border: solid #0275b8;
  border-width: 0 2px 2px 0;
  transform: rotate(42deg);
}
.right {
  display: grid;
  grid-template-columns: 98px auto;
  column-gap: 11px;
  row-gap: 11px;
  width: 591px;
  line-height: 27px;
}
.seg { display: flex; line-height: 25px; }
.seg label {
  height: 27px;
  padding: 0 12px;
  border: 1px solid #acbbc2;
  border-left-width: 0;
}
.seg label + label { padding: 0 11px; }
.seg label:last-child { border-radius: 0 2px 2px 0; }
.seg label:first-child { border-left-width: 1px; border-radius: 2px 0 0 2px; padding-right: 11px; }
.seg label:has(:checked) { border-color: #768d99; background: #768d99; color: #fff; }
.seg input { appearance: none; width: 0; height: 0; margin: 0; display: block; float: left; }
.tagrow { display: flex; gap: 6px; margin-top: 6px; line-height: 18px; align-items: center; }
.text.tag { width: 168px; }
select.text {
  appearance: none;
  width: 90px;
  background: #fff url("data:image/svg+xml,%3Csvg xmlns='http://www.w3.org/2000/svg' width='12' height='8'%3E%3Cpath d='M1 1l5 5.500L11 1' fill='none' stroke='%23333' stroke-width='1.500'/%3E%3C/svg%3E") no-repeat right 3px center;
}
.dotted { border-bottom: 1px dotted #0275b8; line-height: 18px; }
.add { display: flex; margin-top: 6px; }
.checks { display: flex; }
.checks label { margin: 0 10px 0 110px; line-height: 18px; }
.right > .lab[for] { line-height: 18px; }
.right > .lab[for], .right > .checks { margin-top: 9px; }
.actions { display: flex; gap: 11px; padding-top: 11px; }
.save { margin-right: 17px; }

.results {
  position: relative;
  margin-top: 8px;
  border: 1px solid #dfe4e7;
  background: #fff;
  font-size: 13px;
}
table { width: 100%; table-layout: fixed; border-collapse: separate; border-spacing: 0; }
.c1 { width: 12.4%; }
.c2 { width: 14.6%; }
.c3 { width: 5.2%; }
.c4 { width: 28%; }
.c6 { width: 9.2%; }
.c7 { width: 6.8%; }
.c8 { width: 5.7%; }
.c9 { width: 6.3%; }
th, td {
  height: 35px;
  padding: 0 5px 2px;
  border-bottom: 1px solid #ebeef0;
  text-align: left;
  white-space: nowrap;
}
th { height: 34px; padding-bottom: 3px; border-bottom: 2px solid #dfe4e7; font-weight: 400; font-size: 14px; color: #768d99; }
.asc {
  display: inline-block;
  margin-left: 3px;
  border: 4px solid transparent;
  border-top: 0;
  border-bottom: 6px solid #768d99;
}
.host { color: #1f2c33; border-bottom: 1px dotted #1f2c33; }
.zbx, .chip, .prob { display: inline-block; height: 18px; border-radius: 2px; color: #fff; line-height: 17px; }
.zbx { padding: 0 4px; border: 1px solid #2f9f5e; background: #34af67; line-height: 16px; }
.chip { margin-right: 4px; padding: 0 4px; background: #768d99; }
.prob { padding: 0 6px; background: #ffc859; line-height: 18px; }
.dots { margin-left: 3px; line-height: 6px; }
.on { color: #429e47; }
td small { font-size: 13px; color: #768d99; }
.off { color: #b5babd; }
.count { margin: 0; padding: 9px 11px; color: #768d99; text-align: right; }
.marker {
  position: absolute;
  left: -5px;
  top: 72px;
  width: 942px;
  height: 34px;
  border: 3px solid #fb3838;
}
.foot {
  margin-top: auto;
  padding-bottom: 13px;
  color: #768d99;
  font-size: 13px;
  text-align: center;
}
.foot a { color: inherit; border-bottom: 1px dotted #768d99; }

/* browser side rail */
.rail {
  flex: none;
  display: flex;
  flex-direction: column;
  align-items: center;
  width: 65px;
  padding-top: 2px;
}
.rail button { display: flex; align-items: center; justify-content: center; width: 60px; height: 60px; }
.rail button svg { fill: none; }
.rail hr { width: 42px; margin: 19px 0 17px; border: 0; border-top: 1px solid #c4c4c4; }
.rail .low { height: 68px; }
.rail .low:last-child { height: 56px; margin-top: 6px; }

.watermark {
  position: absolute;
  right: 6px;
  bottom: 11px;
  font: 300 50px/74px "Noto Sans CJK SC", sans-serif;
  color: rgba(215, 217, 218, .85);
  text-shadow: 1px 1px 1px rgba(110, 110, 110, .7);
  pointer-events: none;
}
```
